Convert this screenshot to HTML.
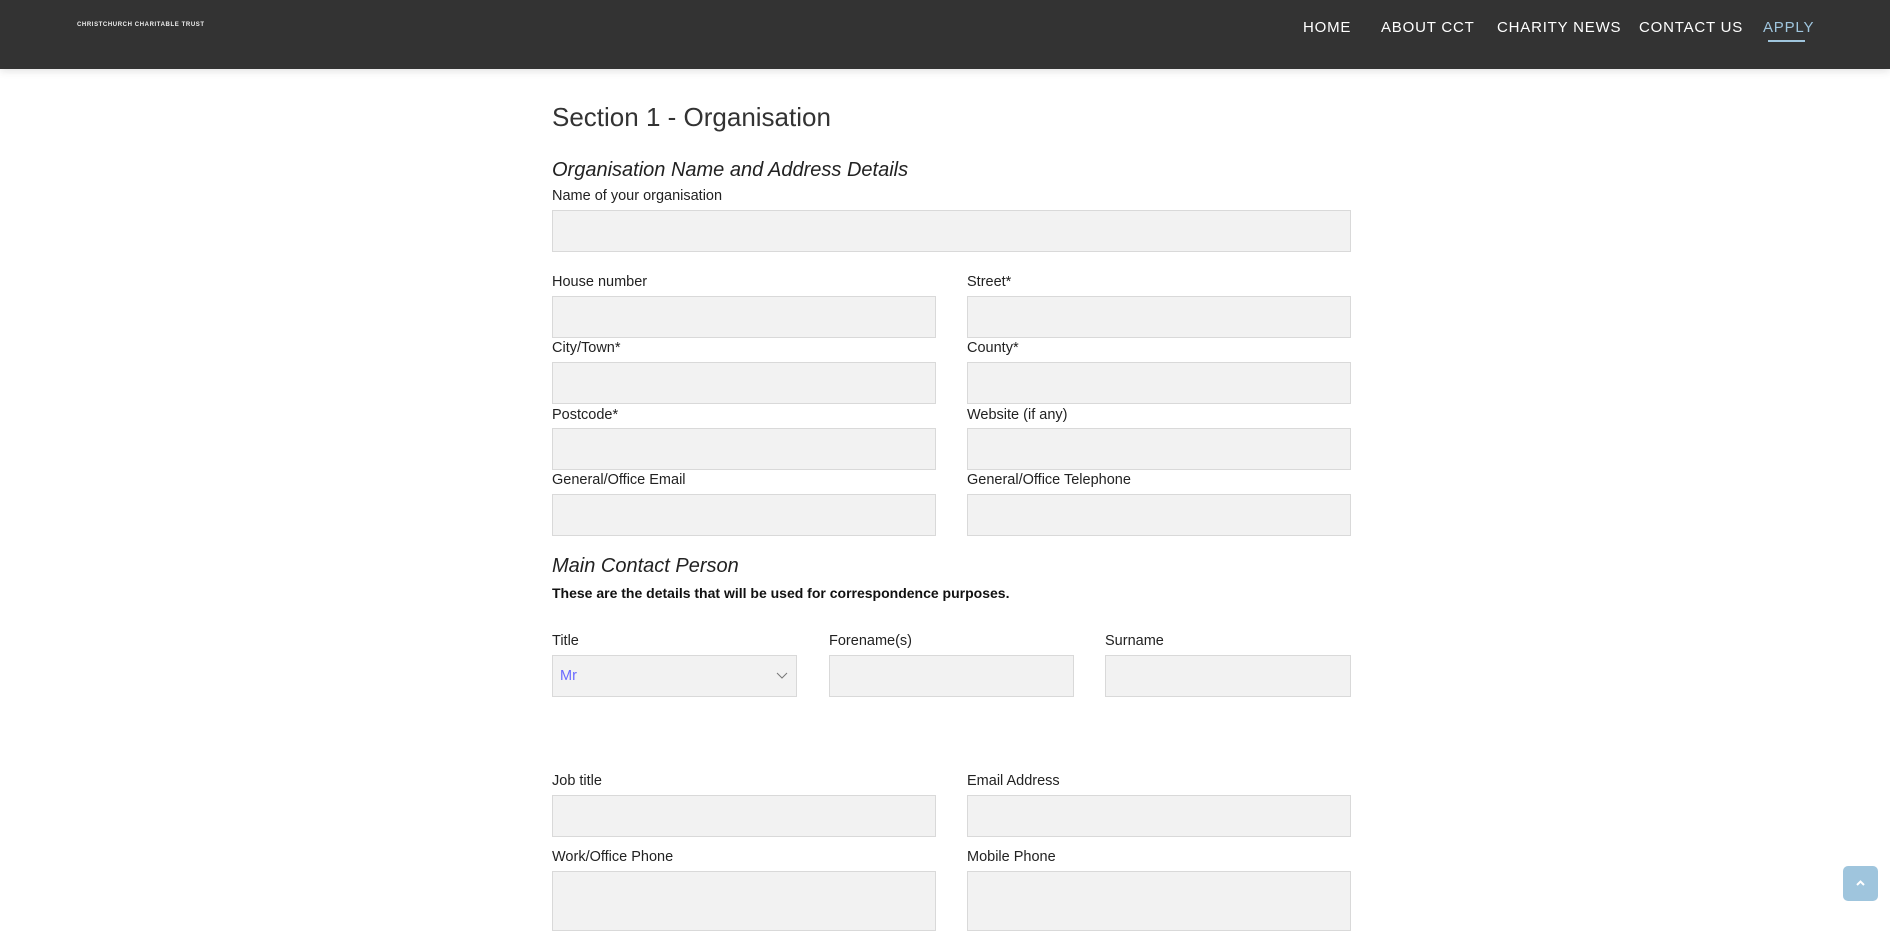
<!DOCTYPE html>
<html><head><meta charset="utf-8"><style>
*{margin:0;padding:0;box-sizing:border-box}
body{width:1890px;height:910px;overflow:hidden;background:#fff;font-family:"Liberation Sans",sans-serif;color:#222;position:relative}
.hdr{position:absolute;left:0;top:0;width:1890px;height:69px;background:#333;box-shadow:0 2px 8px rgba(0,0,0,.12)}
.logo{position:absolute;left:77px;top:22px;font-size:6px;font-weight:bold;letter-spacing:.6px;color:#eee}
.nav{position:absolute;top:19px;font-size:15px;letter-spacing:.8px;color:#fff;white-space:nowrap}
.a{position:absolute;white-space:nowrap}
.lab{font-size:14.5px;color:#222}
.in{position:absolute;height:42px;background:#f2f2f2;border:1px solid #d9d9d9}
</style></head><body>
<div class="hdr">
<div class="logo">CHRISTCHURCH CHARITABLE TRUST</div>
<div class="nav" style="left:1303px">HOME</div>
<div class="nav" style="left:1381px">ABOUT CCT</div>
<div class="nav" style="left:1497px">CHARITY NEWS</div>
<div class="nav" style="left:1639px">CONTACT US</div>
<div class="nav" style="left:1763px;color:#9fc5dd">APPLY</div>
<div style="position:absolute;left:1768px;top:40px;width:37px;height:2px;background:#9fc5dd"></div>
</div>
<div class="a" style="left:552px;top:102px;font-size:26px;color:#333">Section 1 - Organisation</div>
<div class="a" style="left:552px;top:159px;font-size:20px;font-style:italic;color:#222">Organisation Name and Address Details</div>
<div class="a lab" style="left:552px;top:188px">Name of your organisation</div>
<div class="in" style="left:552px;top:210px;width:799px"></div>

<div class="a lab" style="left:552px;top:274px">House number</div>
<div class="a lab" style="left:967px;top:274px">Street*</div>
<div class="in" style="left:552px;top:296px;width:384px"></div>
<div class="in" style="left:967px;top:296px;width:384px"></div>
<div class="a lab" style="left:552px;top:340px">City/Town*</div>
<div class="a lab" style="left:967px;top:340px">County*</div>
<div class="in" style="left:552px;top:362px;width:384px"></div>
<div class="in" style="left:967px;top:362px;width:384px"></div>
<div class="a lab" style="left:552px;top:407px">Postcode*</div>
<div class="a lab" style="left:967px;top:407px">Website (if any)</div>
<div class="in" style="left:552px;top:428px;width:384px"></div>
<div class="in" style="left:967px;top:428px;width:384px"></div>
<div class="a lab" style="left:552px;top:472px">General/Office Email</div>
<div class="a lab" style="left:967px;top:472px">General/Office Telephone</div>
<div class="in" style="left:552px;top:494px;width:384px"></div>
<div class="in" style="left:967px;top:494px;width:384px"></div>

<div class="a" style="left:552px;top:555px;font-size:20px;font-style:italic">Main Contact Person</div>
<div class="a" style="left:552px;top:585px;font-size:14px;font-weight:bold;color:#111">These are the details that will be used for correspondence purposes.</div>

<div class="a lab" style="left:552px;top:633px">Title</div>
<div class="a lab" style="left:829px;top:633px">Forename(s)</div>
<div class="a lab" style="left:1105px;top:633px">Surname</div>
<div class="in" style="left:552px;top:655px;width:245px"><span style="position:absolute;left:7px;top:12px;font-size:14.5px;color:#6a6aff">Mr</span>
<svg style="position:absolute;right:8px;top:16px" width="12" height="8" viewBox="0 0 12 8"><path d="M1 1L6 6L11 1" fill="none" stroke="#777" stroke-width="1"/></svg></div>
<div class="in" style="left:829px;top:655px;width:245px"></div>
<div class="in" style="left:1105px;top:655px;width:246px"></div>

<div class="a lab" style="left:552px;top:773px">Job title</div>
<div class="a lab" style="left:967px;top:773px">Email Address</div>
<div class="in" style="left:552px;top:795px;width:384px"></div>
<div class="in" style="left:967px;top:795px;width:384px"></div>
<div class="a lab" style="left:552px;top:849px">Work/Office Phone</div>
<div class="a lab" style="left:967px;top:849px">Mobile Phone</div>
<div class="in" style="left:552px;top:871px;width:384px;height:60px"></div>
<div class="in" style="left:967px;top:871px;width:384px;height:60px"></div>

<div style="position:absolute;left:1843px;top:866px;width:35px;height:35px;border-radius:5px;background:#9fc5dd">
<svg style="position:absolute;left:13px;top:14px" width="9" height="6" viewBox="0 0 9 6"><path d="M1 5L4.5 1.5L8 5" fill="none" stroke="#fff" stroke-width="2"/></svg></div>
</body></html>
